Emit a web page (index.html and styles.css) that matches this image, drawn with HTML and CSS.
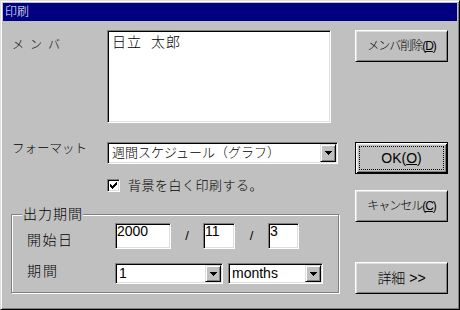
FILE: index.html
```html
<!DOCTYPE html>
<html lang="ja">
<head>
<meta charset="utf-8">
<title>印刷</title>
<link rel="stylesheet" href="styles.css">
</head>
<body>
<div class="window">
  <div class="titlebar">印刷</div>
  <div class="content">
    <div class="left">
      <div class="row row-member">
        <div class="label label-member">メンバ</div>
        <div class="listbox"><div class="item">日立<span class="sp">　</span>太郎</div></div>
      </div>
      <div class="row row-format">
        <div class="label label-format">フォーマット</div>
        <div class="combo combo-format">
          <span class="combo-text">週間スケジュール（グラフ）</span>
          <span class="drop"><svg width="7" height="4" viewBox="0 0 7 4" shape-rendering="crispEdges"><path d="M0 0H7V1H6V2H5V3H4V4H3V3H2V2H1V1H0Z" fill="#000"/></svg></span>
        </div>
      </div>
      <div class="check-row">
        <span class="checkbox"><svg width="7" height="7" viewBox="0 0 7 7" shape-rendering="crispEdges"><path d="M6 0h1v1h-1z M5 1h2v1h-2z M0 2h1v1h-1z M4 2h3v1h-3z M0 3h2v1h-2z M3 3h3v1h-3z M0 4h5v1h-5z M1 5h3v1h-3z M2 6h1v1h-1z" fill="#000"/></svg></span>
        <span class="check-label">背景を白く印刷する。</span>
      </div>
      <div class="group">
        <div class="legend">出力期間</div>
        <div class="grow grow-date">
          <div class="glabel glabel-date">開始日</div>
          <div class="edit edit-year">2000</div>
          <span class="slash slash-1">/</span>
          <div class="edit edit-month">11</div>
          <span class="slash slash-2">/</span>
          <div class="edit edit-day">3</div>
        </div>
        <div class="grow grow-period">
          <div class="glabel glabel-period">期間</div>
          <div class="combo combo-small combo-num">
            <span class="combo-text">1</span>
            <span class="drop"><svg width="7" height="4" viewBox="0 0 7 4" shape-rendering="crispEdges"><path d="M0 0H7V1H6V2H5V3H4V4H3V3H2V2H1V1H0Z" fill="#000"/></svg></span>
          </div>
          <div class="combo combo-small combo-unit">
            <span class="combo-text">months</span>
            <span class="drop"><svg width="7" height="4" viewBox="0 0 7 4" shape-rendering="crispEdges"><path d="M0 0H7V1H6V2H5V3H4V4H3V3H2V2H1V1H0Z" fill="#000"/></svg></span>
          </div>
        </div>
      </div>
    </div>
    <div class="right">
      <div class="btn btn-member">メンバ削除(<u>D</u>)</div>
      <div class="btn btn-default btn-ok"><span class="focus">OK(<u>O</u>)</span></div>
      <div class="btn btn-cancel">キャンセル(<u>C</u>)</div>
      <div class="btn btn-detail">詳細 &gt;&gt;</div>
    </div>
  </div>
</div>
</body>
</html>
```
FILE: styles.css
```css
* { box-sizing: border-box; }
html, body { margin: 0; padding: 0; }
body {
  width: 460px;
  height: 310px;
  overflow: hidden;
  background: #c0c0c0;
  color: #000;
  font-family: "Liberation Sans", "Noto Sans CJK JP", sans-serif;
  font-size: 14px;
  font-weight: 300;
}
.window {
  width: 460px;
  height: 310px;
  background: #c0c0c0;
  border: 1px solid;
  border-color: #dfdfdf #000 #000 #dfdfdf;
  box-shadow: inset 1px 1px #fff, inset -1px -1px #808080;
  padding: 2px;
  display: flex;
  flex-direction: column;
}
.titlebar {
  height: 18px;
  flex: none;
  background: #000080;
  color: #fff;
  font-size: 12px;
  line-height: 19px;
  padding-left: 2px;
  white-space: nowrap;
}
.content {
  flex: 1;
  display: flex;
  padding: 9px 9px 0 8px;
}
.left {
  width: 328px;
  display: flex;
  flex-direction: column;
}
.right {
  width: 93px;
  margin-left: 16px;
  display: flex;
  flex-direction: column;
}

/* sunken / raised frames */
.listbox, .combo, .edit, .checkbox {
  border: 1px solid;
  border-color: #808080 #fff #fff #808080;
  box-shadow: inset 1px 1px #000, inset -1px -1px #dfdfdf;
  background: #fff;
}
.btn, .drop {
  border: 1px solid;
  border-color: #fff #000 #000 #fff;
  box-shadow: inset 1px 1px #dfdfdf, inset -1px -1px #808080;
  background: #c0c0c0;
}
.drop {
  border-color: #dfdfdf #000 #000 #dfdfdf;
  box-shadow: inset 1px 1px #fff, inset -1px -1px #808080;
}

.row { display: flex; }
.label {
  width: 96px;
  flex: none;
  padding-left: 1px;
  font-size: 12px;
  line-height: 14px;
  white-space: nowrap;
}
.row-member { height: 93px; }
.label-member { margin-top: 8px; letter-spacing: 6px; }
.listbox {
  width: 224px;
  height: 93px;
  padding: 3px 4px;
}
.item {
  font-size: 14px;
  line-height: 16px;
  letter-spacing: 1px;
  white-space: nowrap;
}
.sp { letter-spacing: -5px; }

.row-format { margin-top: 19px; height: 22px; }
.label-format { margin-top: 0; font-size: 12.5px; }
.combo {
  display: flex;
  padding: 1px;
}
.combo-format { width: 231px; height: 22px; }
.combo-text {
  flex: 1;
  padding-left: 3px;
  font-size: 13px;
  line-height: 18px;
  white-space: nowrap;
  overflow: hidden;
}
.drop {
  width: 16px;
  flex: none;
  display: flex;
  align-items: center;
  justify-content: center;
}
.drop svg { display: block; }

.check-row {
  display: flex;
  align-items: center;
  height: 13px;
  margin: 15px 0 0 96px;
}
.checkbox {
  width: 13px;
  height: 13px;
  flex: none;
  display: flex;
  align-items: center;
  justify-content: center;
}
.checkbox svg { display: block; }
.check-label {
  margin-left: 8px;
  font-size: 13px;
  line-height: 14px;
  letter-spacing: 0.5px;
  white-space: nowrap;
}

.group {
  margin-top: 22px;
  height: 79px;
  border: 1px solid #808080;
  box-shadow: inset 1px 1px #fff, 1px 1px #fff;
}
.legend {
  width: fit-content;
  margin: -8px 0 0 10px;
  padding: 0 0 0 1px;
  background: #c0c0c0;
  font-size: 14px;
  line-height: 14px;
  letter-spacing: 1px;
  white-space: nowrap;
}
.grow {
  display: flex;
  align-items: center;
  padding-left: 15px;
}
.grow-date { margin-top: 2px; height: 26px; }
.grow-period { margin-top: 14px; height: 21px; }
.glabel {
  width: 88px;
  flex: none;
  align-self: flex-start;
  font-size: 14px;
  line-height: 16px;
  letter-spacing: 2px;
  white-space: nowrap;
}
.glabel-date { margin-top: 9px; letter-spacing: 1.5px; }
.glabel-period { margin-top: 0; }
.edit {
  height: 26px;
  flex: none;
  padding: 1px 0 0 1px;
  font-size: 14px;
  line-height: 12px;
}
.edit-year { width: 56px; }
.edit-month { width: 32px; }
.edit-day { width: 31px; }
.slash {
  text-align: center;
  line-height: 16px;
  font-size: 13px;
}
.slash-1 { width: 32px; }
.slash-2 { width: 33px; }
.combo-small { height: 21px; }
.combo-small .combo-text {
  font-size: 14px;
  line-height: 17px;
  padding-left: 2px;
}
.combo-num { width: 108px; }
.combo-unit { width: 95px; margin-left: 5px; }

.btn {
  width: 93px;
  height: 32px;
  flex: none;
  display: flex;
  align-items: center;
  justify-content: center;
  font-size: 12px;
  line-height: 14px;
  letter-spacing: -1px;
  white-space: nowrap;
}
.btn u { text-decoration: underline; }
.btn-member { margin-top: 0; }
.btn-ok { margin-top: 80px; }
.btn-cancel { margin-top: 16px; }
.btn-detail { margin-top: 40px; font-size: 14px; letter-spacing: 0; }
.btn-default {
  border: 1px solid #000;
  box-shadow: inset 1px 1px #fff, inset -1px -1px #000, inset 2px 2px #dfdfdf, inset -2px -2px #808080;
  padding: 3px;
  align-items: stretch;
}
.focus {
  flex: 1;
  border: 1px dotted #000;
  display: flex;
  align-items: center;
  justify-content: center;
  font-size: 14px;
  letter-spacing: 0;
}
```
